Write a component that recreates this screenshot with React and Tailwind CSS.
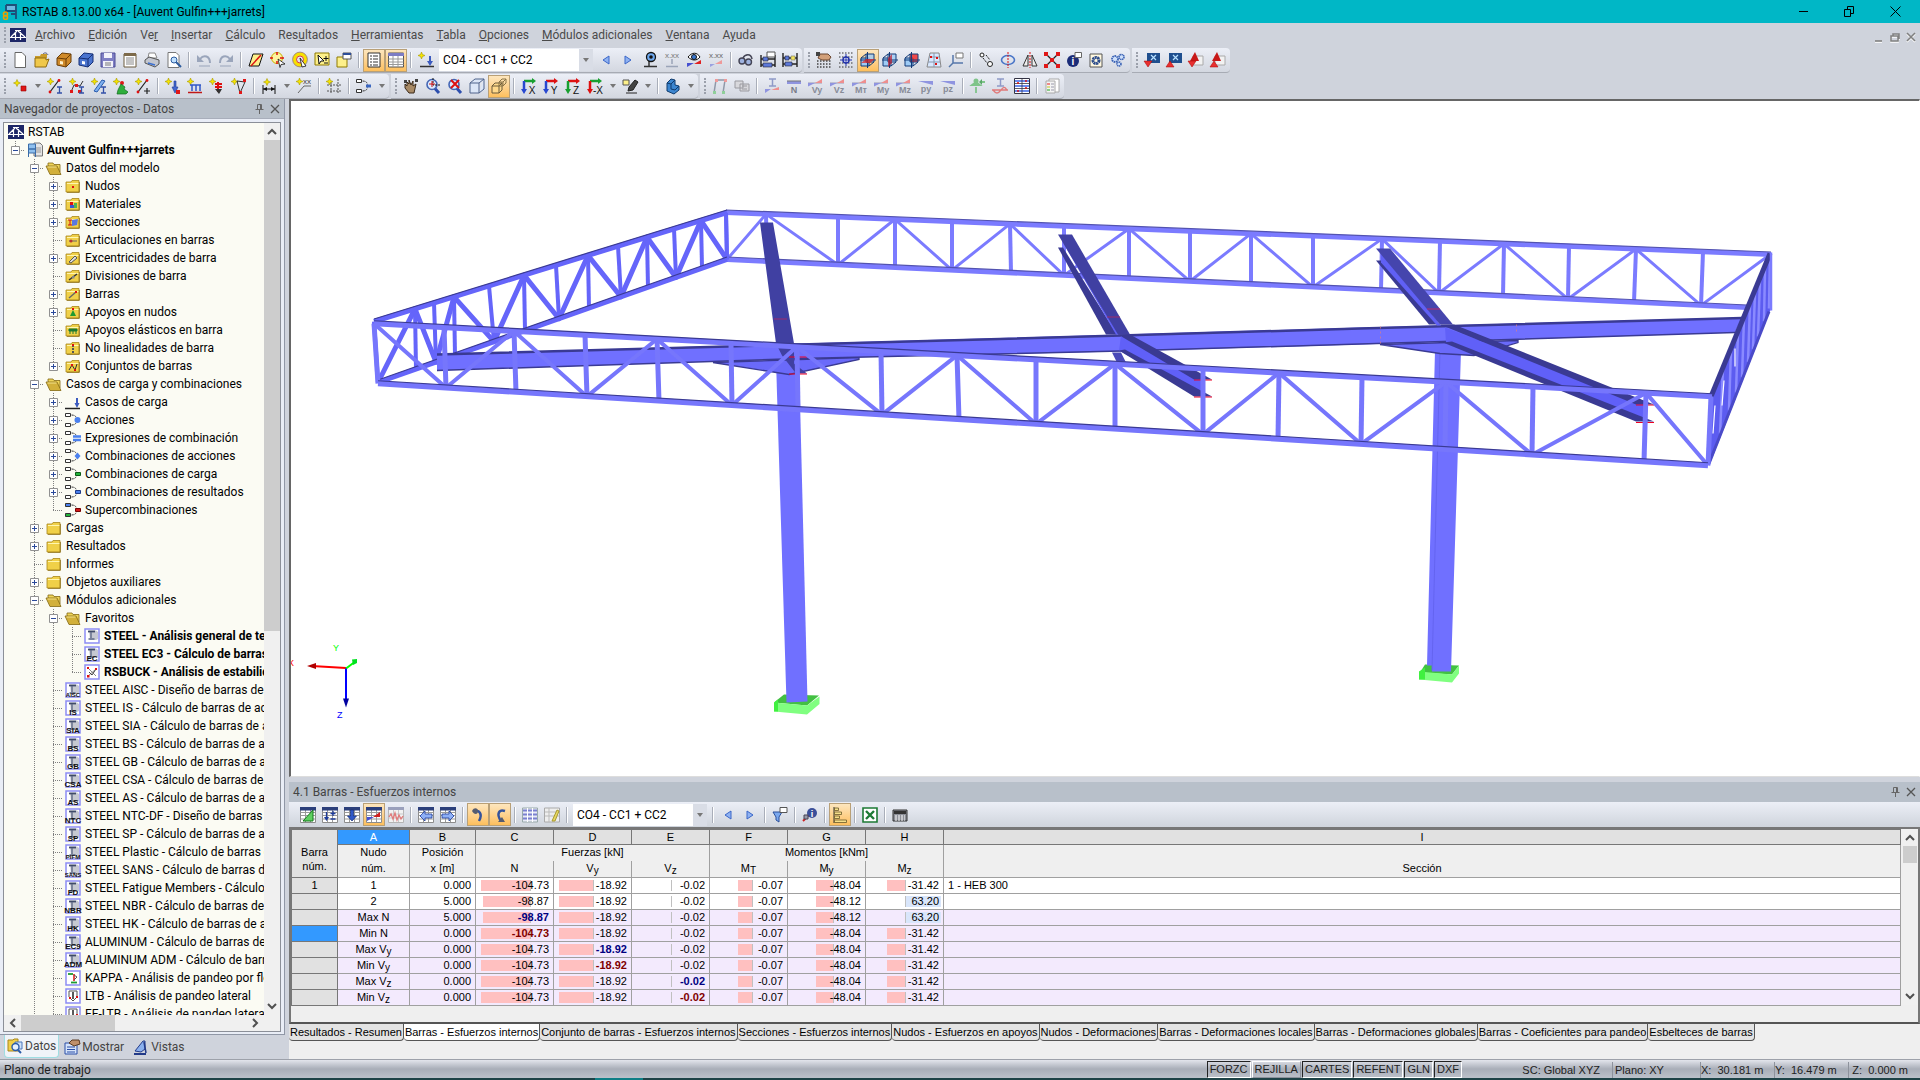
import { Fragment } from "react";

/* ---------- small icon parts ---------- */

const Spark = ({ x = 3.5, y = 3.5 }) => (
  <g transform={`translate(${x} ${y})`}>
    <path d="M0-3.5 1-1 3.5 0 1 1 0 3.5-1 1-3.5 0-1-1Z" fill="#f5e400" stroke="#a89a00" strokeWidth=".6" />
  </g>
);

const Folder = ({ children }) => (
  <>
    <path d="M1 4h5l1-1.5h7V14H1Z" fill="#f0d048" stroke="#a8861a" strokeWidth=".8" />
    <path d="M2 5.5h11.5" stroke="#fff6b0" />
    <path d="M14.4 4v10.4H2" stroke="#8a6c10" fill="none" strokeWidth=".8" />
    {children}
  </>
);

const Member = () => (
  <>
    <path d="M3 14 12 2" stroke="#222" strokeWidth="1.2" />
    <circle cx="3" cy="14" r="1.4" fill="#e01010" />
    <circle cx="12" cy="2.5" r="1.4" fill="#e01010" />
  </>
);

const Grid = ({ c = "#9a9a9a" }) => (
  <>
    <path d="M.5.5h15v15H.5Z" fill="#fff" stroke="#8c8c8c" />
    <path d="M.5 5.5h15M.5 8.5h15M.5 12h15M5.5 3v12M10.5 3v12" stroke={c} />
    <path d="M0 0h16v3.5H0Z" fill="#2b3f7c" />
  </>
);

const Cube = ({ a = "#9ecbf5", b = "#9ecbf5" }) => (
  <>
    <path d="M1 6h8v8H1Z" fill={a} stroke="#123a78" />
    <path d="M6 2h8v8H6Z" fill={b} fillOpacity=".8" stroke="#123a78" />
    <path d="M1 6 6 2M9 14l5-4M7.5 0v16M0 8h16" stroke="#123a78" />
  </>
);

const Lens = ({ children }) => (
  <>
    <path d="m9.5 10 4.5 5" stroke="#2d4fae" strokeWidth="3" />
    <circle cx="7" cy="6.5" r="5" fill="#dcecff" stroke="#4466b5" strokeWidth="1.6" />
    {children}
  </>
);

const Flow = ({ a = "#fff", b = "#fff", children }) => (
  <>
    <path d="M.5 1.5h5v3h-5Z" fill={a} stroke="#333" />
    <path d="M.5 11.5h5v3h-5Z" fill={b} stroke="#333" />
    <path d="M6.5 3c3 0 4.500 1 5 3.500M6.500 13c3 0 4.500-1 5-3.500" stroke="#333" fill="none" strokeDasharray="2 1" />
    {children}
  </>
);

const Diagram = ({ t }) => (
  <>
    <path d="M0 5h14" stroke="#9b9bb5" />
    <path d="M0 5h7L0 8.500Z" fill="#8f94e0" />
    <path d="M7 5h7V1Z" fill="#ee8f8f" />
    <text x="9" y="15" fontSize="9" fontWeight="700" textAnchor="middle" fill="#888c98">{t}</text>
  </>
);

const AxisView = ({ c, d, t }) => (
  <>
    <path d="M3 3h9" stroke={c} strokeWidth="2.500" />
    <path d="M3 3v9" stroke={d} strokeWidth="2.500" />
    <path d="m11 0 4 3-4 3Z" fill={c} />
    <path d="M0 11h6l-3 5Z" fill={d} />
    <text x="11" y="15.500" fontSize="10" textAnchor="middle" fill="#111">{t}</text>
  </>
);

const Truss = () => (
  <>
    <path d="M0 1h16v14H0Z" fill="#1d2667" />
    <path d="M0 10.500h16M1 10 7 4M8 4l7 6M5.500 5v8M10.500 5v8M5 3.500h6" stroke="#fff" fill="none" strokeWidth="1.200" />
  </>
);

const Norm = ({ t, children }) => (
  <>
    <path d="M1 1h14v14H1Z" fill="#fff" stroke="#8d8df5" strokeWidth="1.500" />
    {children || (
      <>
        <path d="M5 2.500h7l2 1.500v7l-2 1H6Z" fill="#c6c9d1" />
        <path d="M4 3.500h7" stroke="#3f4b68" strokeWidth="1.800" />
        <path d="M7 4v6M4.500 11h6" stroke="#5f6a86" strokeWidth="1.400" />
      </>
    )}
    {t && (
      <text x="8" y="14.500" fontSize={t.length > 3 ? 6 : 8} fontWeight="700" textAnchor="middle" fill="#111">{t}</text>
    )}
  </>
);

const ICONS = {
  doc: <path d="M3 .5h7l3.500 3.500v11.500H3Z" fill="#fff" stroke="#666" />,
  open: <><path d="M1 4h5l1-2h6v4H1Z" fill="#c99c2a" /><path d="M1 15V6h11v2l3-1-3 8Z" fill="#f0c84a" stroke="#8f6b10" /><path d="M9 2c2-2 4-1 5 1" stroke="#557" fill="none" /></>,
  blockO: <><path d="m1 6 5-5 9 1v8l-5 5-9-2Z" fill="#d08a2a" stroke="#6b3e08" /><path d="m1 6 9 1 5-5M10 7v8" stroke="#6b3e08" fill="none" /><path d="m4 9 3 .5v3l-3-.5Z" fill="#fff3cf" /></>,
  blockB: <><path d="m1 6 5-5 9 1v8l-5 5-9-2Z" fill="#4a74cf" stroke="#162f75" /><path d="m1 6 9 1 5-5M10 7v8" stroke="#162f75" fill="none" /><path d="m4 9 3 .5v3l-3-.5Z" fill="#fff" /></>,
  save: <><path d="M1 1h14v14H1Z" fill="#7f7fc4" stroke="#4d4d96" /><path d="M4 1h8v5H4ZM3 9h10v6H3Z" fill="#f2f2fa" /><path d="M5 11h6M5 13h6" stroke="#777" /></>,
  report: <><path d="M2 2h12v13H2Z" fill="#fff" stroke="#6b5a3c" /><path d="M2 1h12v3H2Z" fill="#7d6a4a" /><path d="M4 6h8M4 8h8M4 10h8M4 12h8" stroke="#888" /></>,
  print: <><path d="M5 1h6l2 5H4Z" fill="#fff" stroke="#888" /><path d="m1 8 4-3 10 3v4l-4 3-10-4Z" fill="#c3c6cf" stroke="#555" /><path d="m4 11 7 2" stroke="#3b6fd0" strokeWidth="1.500" /></>,
  preview: <><path d="M2 .5h8l3 3v12H2Z" fill="#fff" stroke="#777" /><circle cx="8" cy="8" r="3" fill="#bfe0ff" stroke="#2d5c9e" /><path d="m10 10 5 5" stroke="#2d5c9e" strokeWidth="2" /></>,
  undo: <><path d="M4 7c4-5 10-3 10 4" stroke="#9aa5bb" strokeWidth="2" fill="none" /><path d="M1 3v7h7Z" fill="#9aa5bb" /><path d="M3 14h11" stroke="#9aa5bb" /></>,
  redo: <><path d="M12 7C8 2 2 4 2 11" stroke="#9aa5bb" strokeWidth="2" fill="none" /><path d="M15 3v7H8Z" fill="#9aa5bb" /><path d="M2 14h11" stroke="#9aa5bb" /></>,
  selPoly: <><path d="M5 2h10l-4 12H1Z" fill="#fdf08a" stroke="#111" /><path d="M3 14 13 3" stroke="#d11" strokeWidth="1.500" /></>,
  selCirc: <><circle cx="7" cy="6" r="5.500" fill="#fdf3a0" stroke="#c8b000" /><path d="M7 0v3M7 9v3M0 6h3M10 6h4" stroke="#d11" strokeWidth="1.500" /><path d="m8 7 7 5-4 .5-1 3Z" fill="#fff" stroke="#111" strokeWidth=".8" /></>,
  selRing: <><circle cx="8" cy="7.500" r="5.500" fill="none" stroke="#f7e000" strokeWidth="3.500" /><circle cx="8" cy="7.500" r="3.500" fill="none" stroke="#d11" strokeWidth=".8" /><circle cx="8" cy="7.500" r="7.400" fill="none" stroke="#866" strokeWidth=".7" /><path d="m8 6 6 8-4 1Z" fill="#fff" stroke="#111" strokeWidth=".8" /></>,
  selBox: <><path d="M1 1h14v12H1Z" fill="#fdf08a" stroke="#8f7b00" /><path d="m4 3 6 6H7l-2 3Z" fill="#fff" stroke="#111" /><path d="M12 4v5M9.500 6.500h5M10 11h4" stroke="#111" /></>,
  selWin: <><path d="M1 5h10v10H1Z" fill="#fdf08a" stroke="#8f7b00" /><path d="M7 1h8v6H7Z" fill="#fff" stroke="#555" /><path d="M7 1h8v2H7Z" fill="#2b4d9a" /></>,
  nav: <><path d="M2 1h12v14H2Z" fill="#fff" stroke="#333" /><path d="M4 4h2M7 4h5M4 7h2M7 7h5M4 10h2M7 10h5M4 13h2M7 13h5" stroke="#333" /></>,
  tables: <><path d="M.5 1h15v14H.5Z" fill="#fff" stroke="#555" /><path d="M0 1h16v3H0Z" fill="#7d7dc4" /><path d="M.5 7h15M.5 10h15M.5 12.500h15M5 4v11M10 4v11" stroke="#999" /></>,
  loadNew: <><Spark /><path d="M2 14.500h14" stroke="#333" strokeWidth="1.500" /><path d="M11 4v5H9l3 5 3-5h-2V4Z" fill="#3c5bbf" /></>,
  left: <path d="M11 4v8L5 8Z" fill="#8fb2f2" stroke="#3a66c8" />,
  right: <path d="M5 4v8l6-4Z" fill="#8fb2f2" stroke="#3a66c8" />,
  eyeLoad: <><path d="M2 14.500h13M7 8v6" stroke="#333" strokeWidth="1.500" /><circle cx="9" cy="5" r="4.500" fill="#6ea8ee" stroke="#111" strokeWidth="1.300" /><circle cx="9" cy="5" r="1.800" fill="#111" /></>,
  xxx: <><text x="8" y="6" fontSize="8" textAnchor="middle" fill="#777">x.xx</text><path d="M2 14.500h12M8 7v5" stroke="#9aa4b8" strokeWidth="1.500" /></>,
  eyeRes: <><path d="M2 5c4-5 9-5 12 0-3 4-8 4-12 0Z" fill="#fff" stroke="#111" /><circle cx="8" cy="5" r="2.500" fill="#3b78d0" stroke="#111" /><path d="M1 11h7l-7 4Z" fill="#4650d0" /><path d="M8 12h7V8Z" fill="#e02020" /></>,
  xxxRes: <><text x="8" y="6" fontSize="8" textAnchor="middle" fill="#666">x.xx</text><path d="M2 12h5l-5 3Z" fill="#9aa0e0" /><path d="M7 12h7V8Z" fill="#ee9a9a" /></>,
  gogg: <><circle cx="4" cy="9" r="3" fill="#9fb3e0" stroke="#445" strokeWidth="1.400" /><circle cx="10.500" cy="10" r="3" fill="#9fb3e0" stroke="#445" strokeWidth="1.400" /><path d="M5 6c2-4 8-5 9 1" stroke="#445" fill="none" strokeWidth="1.500" /></>,
  abacus: <><path d="M1 3v12M15 3v12M1 7h14M1 13h14" stroke="#222" strokeWidth="1.400" /><path d="M3 5h5v4H3ZM3 11h9v4H3Z" fill="#5c78d8" stroke="#223" strokeWidth=".6" /><path d="M7 0h8v5H7Z" fill="#fff" stroke="#555" /></>,
  abacus2: <><path d="M1 1v14M15 1v14M1 6h14M1 12h14" stroke="#222" strokeWidth="1.400" /><path d="M3 4h4v4H3ZM3 10h7v4H3Z" fill="#5c78d8" stroke="#223" strokeWidth=".6" /><path d="M9 4h4v4H9Z" fill="#f3e35c" stroke="#776" strokeWidth=".6" /></>,
  handGrid: <><path d="M1 9h14M1 12h14M1 15h14" stroke="#444" strokeDasharray="1.500 1.500" strokeWidth="1.500" /><path d="M4 2h8l3 3-2 3H6L2 6Z" fill="#d2a07a" stroke="#6b4630" /><path d="M0 0h4v4H0Z" fill="#444" /></>,
  gridPt: <><path d="M1 1h14M1 5h14M1 11h14M1 15h14" stroke="#333" strokeDasharray="1.500 1.500" /><circle cx="8" cy="8" r="3" fill="#fff" stroke="#2233aa" strokeWidth="1.500" /><path d="M8 2v12M2 8h12" stroke="#2233aa" /></>,
  wp1: <><Cube /><path d="m1 11 5-4 9 0-5 4Z" fill="#e02020" fillOpacity=".7" /></>,
  wp2: <><Cube /><path d="m6 6 4-4v9l-4 4Z" fill="#c02030" fillOpacity=".7" /></>,
  wp3: <Cube b="#f02020" />,
  net: <><path d="M4 1h9l2 14H1Z" fill="#d8e8ff" stroke="#888" /><path d="M3 5h10M2 10h12M8 1v14" stroke="#8898b0" /><path d="M4 4h2v2H4ZM10 5h2v2h-2ZM9 11h2v2H9Z" fill="#d11" /></>,
  csys: <><path d="M5 3v8H15M5 11l-4 4" stroke="#5577aa" fill="none" strokeWidth="1.500" /><path d="M8 1h7v5H8Z" fill="#fff" stroke="#777" /></>,
  move: <><circle cx="4" cy="3" r="2" fill="#fff" stroke="#222" /><circle cx="12" cy="12" r="2.500" fill="#fff" stroke="#222" /><path d="m5 6 4 5M8 3l4 5" stroke="#222" strokeDasharray="2 1" /></>,
  rotate: <><ellipse cx="8" cy="8" rx="6.500" ry="4.500" fill="none" stroke="#4a76c8" strokeWidth="1.600" /><path d="M8 0v16" stroke="#d11" strokeDasharray="2 1" /></>,
  mirror: <><path d="M6 3v11H1ZM10 3v11h5Z" fill="#eee" stroke="#333" /><path d="M8 0v16" stroke="#d11" strokeDasharray="2 1" /></>,
  cross: <><path d="m2 2 12 12M14 2 2 14" stroke="#222" strokeWidth="1.300" /><path d="M0 0h4v4H0ZM12 0h4v4h-4ZM0 12h4v4H0ZM12 12h4v4h-4ZM6 6h4v4H6Z" fill="#e01818" /></>,
  info: <><circle cx="7" cy="9" r="6" fill="#1b2c78" /><text x="7" y="13" fontSize="10" fontWeight="700" textAnchor="middle" fill="#fff">i</text><path d="M9 .5h6.500v5H9Z" fill="#fff" stroke="#666" /></>,
  gearDoc: <><path d="M2 2h12v13H2Z" fill="#fff8e0" stroke="#555" /><circle cx="8" cy="8.500" r="3" fill="none" stroke="#2a4a8a" strokeWidth="3" strokeDasharray="2 .5" /></>,
  gears: <><circle cx="5" cy="7" r="3" fill="#cfe0fa" stroke="#3a62b5" strokeWidth="1.800" strokeDasharray="1.600 .6" /><circle cx="11.500" cy="5" r="2.500" fill="#cfe0fa" stroke="#3a62b5" strokeWidth="1.600" strokeDasharray="1.400 .5" /><circle cx="9" cy="12" r="2" fill="#cfe0fa" stroke="#3a62b5" strokeWidth="1.600" strokeDasharray="1.200 .5" /></>,
  dlA: <><path d="M3 1h13v10H3Z" fill="#1f4f8f" /><path d="m7 3 5 5M12 3 7 8" stroke="#b8e0ff" strokeWidth="1.200" /><path d="M0 9h8l-4 6Z" fill="#e83030" stroke="#a00" strokeWidth=".5" /></>,
  ulA: <><path d="M3 1h13v10H3Z" fill="#1f4f8f" /><path d="m7 3 5 5M12 3 7 8" stroke="#b8e0ff" strokeWidth="1.200" /><path d="M0 15h8L4 9Z" fill="#e83030" stroke="#a00" strokeWidth=".5" /></>,
  dlB: <><path d="M5 4h10v9H5Z" fill="#f2f2f2" stroke="#aaa" /><path d="M7 0 2 9h9Z" fill="#c81818" /><path d="M0 9h8l-4 6Z" fill="#e83030" stroke="#a00" strokeWidth=".5" /></>,
  ulB: <><path d="M5 4h10v9H5Z" fill="#f2f2f2" stroke="#aaa" /><path d="M7 0 2 9h9Z" fill="#c81818" /><path d="M0 15h8L4 9Z" fill="#e83030" stroke="#a00" strokeWidth=".5" /></>,

  node: <><Spark x={5} y={5} /><path d="M9 8h5v5H9Z" fill="#e01818" stroke="#900" strokeWidth=".6" /></>,
  member: <><Member /><Spark /><path d="M10 9h5M12.500 9v6M10 15h5" stroke="#3350a8" strokeWidth="1.300" /></>,
  memberSet: <><path d="M2 14 5 7l6 1 3-5" stroke="#333" fill="none" /><path d="M1 12h3v3H1ZM6 6h3v3H6ZM9 12h3v3H9Z" fill="#e01818" /><Spark /><path d="M10 9h5M12.500 9v6M10 15h5" stroke="#3350a8" strokeWidth="1.300" /></>,
  section: <><path d="m3 13 8-11 3 1-8 11Z" fill="#7fb0f0" stroke="#2a5cae" /><Spark /><path d="M10 9h5M12.500 9v6M10 15h5" stroke="#3350a8" strokeWidth="1.300" /></>,
  support: <><Spark /><circle cx="9" cy="5" r="2" fill="#e01818" /><path d="m8 6 4 3-1 2 4 3-2 2H4l1-4Z" fill="#2fae3c" stroke="#136a1c" strokeWidth=".7" /></>,
  hinge: <><Member /><Spark /><path d="M12 10v6M9 13h6" stroke="#222" strokeWidth="1.200" /></>,
  nodeLoad: <><Spark /><path d="M9 3v6H7l3 6 3-6h-2V3Z" fill="#4468d0" stroke="#1b3a90" strokeWidth=".6" /><path d="M11 12h4v4h-4Z" fill="#e01818" /></>,
  lineLoad: <><Spark /><path d="M3 7h11M5 7v6M9 7v6M13 7v6" stroke="#3058c8" strokeWidth="1.500" /><path d="M1 14.500h14" stroke="#c01818" strokeWidth="1.500" /></>,
  redLoad: <><Spark /><path d="M9 4v10M6 6h7M6 9h7" stroke="#d11" strokeWidth="2" /><path d="M6 11h7l-3 5Z" fill="#333" /></>,
  impose: <><Spark /><path d="m6 3 8 1-5 11Z" fill="none" stroke="#333" /><path d="M12 1h3v3h-3ZM8 13h3v3H8Z" fill="#e01818" /></>,
  dim: <><path d="M2 7v9M14 7v9M2 11h12" stroke="#111" /><path d="m2 11 4-2v4ZM14 11l-4-2v4Z" fill="#111" /><Spark x={6} y={4} /></>,
  dimX: <><text x="11" y="6" fontSize="8" textAnchor="middle" fill="#444">xx</text><path d="M2 15 8 8h7" stroke="#666" fill="none" /><Spark /></>,
  guide: <><path d="M5 4v12M12 1v15M1 7h15M1 13h15" stroke="#555" strokeDasharray="2 1" /><Spark /></>,
  flow: <Flow><path d="M10 8h5" stroke="#3a66c0" strokeWidth="3" /></Flow>,
  hand: <><path d="M1 2h3v3H1ZM12 1h3v3h-3Z" fill="#444" /><path d="m2 6 2 2V4l2 2V2l2 5 2-4v5l3-2-2 9H6L2 10Z" fill="#a88a66" stroke="#3a2a1a" /></>,
  zoomWin: <Lens><path d="M8 0v7h7" stroke="#111" fill="none" strokeDasharray="2 1" /><path d="M7 3v6M4 6h6" stroke="#c11" /></Lens>,
  zoomX: <Lens><path d="m4 2 8 8M12 2 4 10" stroke="#d11" strokeWidth="2" /></Lens>,
  cube: <path d="M1 5h9v10H1ZM1 5l5-4h9l-5 4M15 1v10l-5 4" fill="#dbe6f7" stroke="#51658c" />,
  cubeAct: <><path d="M1 8h7v7H1ZM1 8l3-3h7v7l-3 3M8 8l3-3" fill="#ffd98c" stroke="#6b5a3a" /><path d="M8 4h4v4H8ZM8 4l3-3h4v4l-3 3M12 4l3-3" fill="none" stroke="#8a7446" /></>,
  vx: <AxisView c="#18a030" d="#2848d0" t="X" />,
  vy: <AxisView c="#d11" d="#2848d0" t="Y" />,
  vz: <AxisView c="#d11" d="#18a030" t="Z" />,
  vmx: <AxisView c="#18a030" d="#d11" t="-X" />,
  light: <><path d="M1 2h6v5H1Z" fill="#fdf08a" stroke="#555" /><path d="m7 9 6-7 3 2-5 8-5 1ZM4 15h11" fill="#444" stroke="#222" /></>,
  solid: <><path d="m2 5 4-4 4 1v5l4 1v4l-5 4-7-3Z" fill="#3c86d0" stroke="#0f3a6c" /><path d="m2 5 4 1 4-4M6 6v5l4 1 4-4" stroke="#0f3a6c" fill="none" /></>,
  frame: <><path d="M2 15 4 2h9l-2 13" fill="none" stroke="#8f98a8" strokeWidth="1.500" /><path d="M3 1h3v3H3ZM12 1h3v3h-3Z" fill="#ef9a9a" /><path d="M1 13h3v3H1ZM10 13h3v3h-3Z" fill="#8fcf9a" /></>,
  film: <><path d="M1 3h8v7H1ZM6 6h9v7H6Z" fill="#d8d8dc" stroke="#9a9aa0" /><path d="M8 8h5M8 11h5" stroke="#9a9aa0" /></>,
  iSec: <><path d="M5 1h7M8.500 1v7M5 8h7" stroke="#8f9ac8" strokeWidth="1.500" /><path d="M1 11h6l-6 4Z" fill="#8f94e0" /><path d="M7 12h8V9Z" fill="#ee8f8f" /></>,
  dN: <><path d="M1 3h14v3H1Z" fill="#8f94e0" /><path d="M1 3h14" stroke="#777" /><text x="8" y="15" fontSize="9" fontWeight="700" textAnchor="middle" fill="#777b88">N</text></>,
  dVy: <Diagram t="Vy" />, dVz: <Diagram t="Vz" />, dMt: <Diagram t="Mт" />, dMy: <Diagram t="My" />, dMz: <Diagram t="Mz" />,
  dpy: <><path d="M0 3h15v4Z" fill="#8f94e0" /><text x="8" y="14" fontSize="9" fontWeight="700" textAnchor="middle" fill="#888c98">py</text></>,
  dpz: <><path d="M0 3h15v4Z" fill="#8f94e0" /><text x="8" y="14" fontSize="9" fontWeight="700" textAnchor="middle" fill="#888c98">pz</text></>,
  react: <><circle cx="6" cy="3" r="2.500" fill="#7fc48a" /><path d="m2 7 4-3 4 3ZM10 4h5M6 9v6" stroke="#7fc48a" fill="#7fc48a" strokeWidth="1.800" /><path d="m12 1-3 3 3 3Z" fill="#5aa868" /></>,
  iWave: <><path d="M5 1h7M8.500 1v7M5 8h7" stroke="#8f9ac8" strokeWidth="1.500" /><path d="M0 12h16M1 12c3 4 5 4 8 0s4-3 6 0" stroke="#e07a7a" fill="none" strokeWidth="1.300" /></>,
  winGrid: <><path d="M.5.500h15v15H.5Z" fill="#fff" stroke="#334" /><path d="M1 3h14M1 8h14M1 13h14" stroke="#3b67e8" strokeWidth="1.500" /><path d="M8 0v16M0 5.500h16M0 10.500h16" stroke="#334" strokeWidth=".8" /><path d="M3 5h2M11 10h2M11 3h2M3 13h2" stroke="#d11" strokeWidth="1.500" /></>,
  legend: <><path d="M5 1h10v13H5Z" fill="#fff" stroke="#aaa" /><path d="M2 3h9v12H2Z" fill="#f4f4f4" stroke="#aaa" /><path d="M3 5h3v2H3Z" fill="#e88" /><path d="M3 8h3v2H3Z" fill="#dd8" /><path d="M3 11h3v2H3Z" fill="#8c8" /><path d="M7 6h3M7 9h3M7 12h3" stroke="#99a" /></>,

  tEdit: <><Grid /><path d="M13 3v11H3Z" fill="#5fd060" stroke="#157a1c" /></>,
  tRow: <><Grid /><path d="M4.500 5v6M11 4v5M8.500 6.500h5M8.500 12h5" stroke="#1c3a9a" strokeWidth="1.300" /><path d="M2 10h5l-2.500 4Z" fill="#1c3a9a" /></>,
  tDown: <><Grid /><path d="M6.500 3h3v6h3l-4.500 5-4.500-5h3Z" fill="#2f58c8" stroke="#122c78" strokeWidth=".7" /></>,
  tRes: <><Grid /><path d="M1 10h7l-7 4Z" fill="#4650d0" /><path d="M7 10 14 5v5Z" fill="#d02020" /></>,
  tPulse: <><path d="M.5.500h15v15H.5Z" fill="#f2f2f2" stroke="#b5b5b5" /><path d="M.5 7h15M.5 11h15M5.500 3v12M10.500 3v12" stroke="#c8c8c8" /><path d="M0 0h16v3H0Z" fill="#9aa0bc" /><path d="M1 10l2-3 2 5 2-6 2 7 2-5 2 4 2-3" stroke="#e07a7a" fill="none" strokeWidth="1.300" /></>,
  tL: <><Grid /><path d="m2 9 5-5v3h7v4H7v3Z" fill="#8fb0f5" stroke="#1c3a9a" strokeWidth=".8" /></>,
  tR: <><Grid /><path d="m14 9-5-5v3H2v4h7v3Z" fill="#8fb0f5" stroke="#1c3a9a" strokeWidth=".8" /></>,
  hook1: <><path d="M4 5c5-3 9 2 5 9" stroke="#35539c" strokeWidth="2.500" fill="none" /><path d="M2 4c2-4 6-3 6 0 0 4-4 4-6 0Z" fill="#555c70" /></>,
  hook2: <><path d="M13 4C7 2 4 7 9 14" stroke="#35539c" strokeWidth="2.500" fill="none" /><path d="m6 15 7 0-3-5Z" fill="#555c70" /></>,
  tCols: <><path d="M.5 1h15v14H.5Z" fill="#e8eaf6" stroke="#9aa" /><path d="M1 3.500h14M1 7.500h14M1 11.500h14" stroke="#7a80d0" strokeWidth="2" /><path d="M5.500 1v14M10.500 1v14" stroke="#fff" /></>,
  tPen: <><path d="M.5 1h15v14H.5Z" fill="#eee" stroke="#aaa" /><path d="M1 5h14M1 9h14M5 1v14" stroke="#bbb" /><path d="m8 14 5-11 2 1-4 10Z" fill="#e8d860" stroke="#a89a30" /></>,
  filter: <><path d="M1 5h9l-3 5v5l-3-2v-3Z" fill="#7aa8ee" stroke="#2a4f9a" /><path d="M8 .5h7v5H8Z" fill="#fff" stroke="#555" /></>,
  infoT: <><path d="m1 14 6-6" stroke="#c22" strokeWidth="2" /><circle cx="10" cy="6" r="5" fill="#3b4f9a" /><text x="10" y="9.500" fontSize="9" fontWeight="700" textAnchor="middle" fill="#fff">i</text><path d="M2 8h4v4H2Z" fill="#99a" stroke="#445" /></>,
  bars: <><path d="M2 0v16" stroke="#333" /><path d="M2.500 1h4v2.500h-4ZM2.500 5h7v2.500h-7ZM2.500 9h5v2.500h-5ZM2.500 13h12v2.500h-12Z" fill="#f7e08a" stroke="#6b5a2a" strokeWidth=".8" /></>,
  excel: <><path d="M1 1h14v14H1Z" fill="#fff" stroke="#1d7a35" strokeWidth="1.600" /><path d="m4 4 8 8M12 4l-8 8" stroke="#1d7a35" strokeWidth="2.400" /></>,
  calc: <><path d="M1 3h14v11H1Z" fill="#8c8f98" stroke="#333" /><path d="M2 4h12v3H2Z" fill="#333" /><path d="M3 9h10M3 11h10M3 13h10" stroke="#fff" strokeDasharray="2 1" /></>,

  truss: <Truss />,
  model: <><path d="M7 1h6l2.500 2.500V14H7Z" fill="#e4e4e4" stroke="#777" /><path d="M9 6h5M9 8h5M9 10h5" stroke="#999" /><path d="M1.500 2h7v5h-7ZM1.500 7h7v4h-7M1.500 15V5M8.500 15V6" fill="#8fc0ee" stroke="#3a6ca8" /></>,
  fOpen: <><path d="M2 5V3h5l1 1.500h6V12H4Z" fill="#efd55a" stroke="#846812" strokeWidth=".8" /><path d="M0 6h11l4 8.500H4Z" fill="#d2b03a" stroke="#846812" strokeWidth=".8" /><path d="M1.500 7h9" stroke="#f5e48c" /></>,
  f: <Folder />,
  fNode: <Folder><path d="M7 8h2v2H7Z" fill="#d11" /></Folder>,
  fMat: <Folder><path d="M5 6h3v3H5Z" fill="#d11" /><path d="M5 9h4v3H5Z" fill="#3a58d0" /><path d="M9 7h3v5H9Z" fill="#4fb84f" /></Folder>,
  fSec: <Folder><path d="m7 6 6-1-1 6-5 1Z" fill="#5a78e0" /><path d="M3 6h4M5 6v5M3 11h4" stroke="#c11" /></Folder>,
  fArt: <Folder><path d="M4 9h8" stroke="#666" /><circle cx="6" cy="9" r="1.500" fill="#b33" /></Folder>,
  fExc: <Folder><path d="m4 12 6-6 2 2-6 5Z" fill="#ddd" stroke="#555" /></Folder>,
  fDiv: <Folder><path d="m4 12 8-6" stroke="#333" strokeWidth="1.500" /><path d="M7 8h2.500v2.500H7Z" fill="#888" /></Folder>,
  fBar: <Folder><path d="m4 12 7-6" stroke="#666" strokeWidth="1.500" /><path d="M10 5h2v2h-2Z" fill="#d11" /></Folder>,
  fSup: <Folder><path d="m8 6 3 6H5Z" fill="#1f9a32" /><path d="M7 4h2v2H7Z" fill="#d11" /></Folder>,
  fEla: <Folder><path d="M4 7h8v2H4ZM5 9v3M8 9v3M11 9v3" fill="#1f7a32" stroke="#1f7a32" /></Folder>,
  fNl: <Folder><path d="M8 5v8" stroke="#555" strokeWidth="2" strokeDasharray="2 1" /><path d="M7 4h2v2H7Z" fill="#d11" /></Folder>,
  fSet: <Folder><path d="m4 12 3-5 3 5 2-6" fill="none" stroke="#333" /><path d="M6 6h2v2H6ZM9 11h2v2H9Z" fill="#d11" /></Folder>,
  load: <><path d="M0 14.500h15" stroke="#222" strokeWidth="1.500" /><path d="M11 4v5H9.500l2.500 5 2.500-5H13V4Z" fill="#3c5bbf" /></>,
  acc: <Flow><circle cx="12.500" cy="8" r="3" fill="#4a80ee" /></Flow>,
  expr: <Flow><path d="M8 6.500h8M8 10h8" stroke="#4a80ee" strokeWidth="2.400" /></Flow>,
  cAcc: <Flow><path d="m12.500 4.500 3 3.500-3 3.500-3-3.500Z" fill="#4a80ee" /></Flow>,
  cCarga: <Flow><path d="M10.500 6.500h5v3h-5Z" fill="#22b43a" stroke="#0b5a16" /></Flow>,
  cRes: <Flow><path d="M10.500 6.500h5v3h-5Z" fill="#4a80ee" stroke="#1c3a8a" /></Flow>,
  cSup: <Flow a="#4a80ee" b="#22b43a"><path d="M10.500 6.500h5v3h-5Z" fill="#d01818" stroke="#700" /></Flow>,
  steel: <Norm />,
  buck: <Norm><path d="M4 4 12 12M4 12l8-7" stroke="#888" /><path d="m5 8 3 3 4-6" fill="none" stroke="#444" /><path d="M3 11h2.500v2.500H3ZM3 3h2v2H3ZM11 4h2v2h-2Z" fill="#d11" /></Norm>,
  kappa: <Norm><path d="M3 4h5" stroke="#1f9a32" strokeWidth="1.800" /><path d="M9 4v7" stroke="#d11" strokeWidth="1.500" /><path d="m9 5 3 2-3 3" fill="none" stroke="#555" /><path d="M6 12.500h6" stroke="#1f9a32" strokeWidth="1.800" /></Norm>,
  ltb: <Norm><path d="M4 3v6l4 4 4-4V3Z" fill="none" stroke="#555" /><path d="M8 4v7" stroke="#222" strokeWidth="1.500" /><path d="M4 9h2v2H4ZM11 8h2v2h-2Z" fill="#d11" /></Norm>,

  tabDatos: <><path d="M1 2h5l1-1h4v12H1Z" fill="#f0d048" stroke="#a8861a" /><path d="M8 4h7v7H8Z" fill="#cfe2fa" stroke="#4a76b8" /><circle cx="8.500" cy="9" r="3.500" fill="#e6f1ff" stroke="#2a5ca8" strokeWidth="1.400" /><path d="m11 12 3 3" stroke="#2a5ca8" strokeWidth="2" /></>,
  tabMostrar: <><path d="M1 4h12v11H1Z" fill="#d6e4fa" stroke="#2a4fa8" /><path d="M3 8h8M3 10.500h8M3 13h8" stroke="#2a4fa8" /><path d="m5 4 3-3 7 0 1 4-6 2Z" fill="#c0906a" stroke="#5a3a22" /></>,
  tabVistas: <><path d="M1 15h12" stroke="#223a88" strokeWidth="2" /><path d="m2 12 8-10 2 0v8l-4 3Z" fill="#8ab0ee" stroke="#223a88" /><path d="m11 3 2 11" stroke="#223a88" strokeWidth="1.500" /></>,
};

["AISC", "IS", "SIA", "BS", "GB", "CSA", "AS", "NTC", "SP", "PIFM", "SANS", "FD", "NBR", "HK", "EC9", "ADM", "EC"].forEach((t) => {
  ICONS["n" + t] = <Norm t={t} />;
});

const Icon = ({ name, className = "size-4" }) => (
  <svg viewBox="0 0 16 16" aria-hidden="true" className={className + " shrink-0 overflow-visible font-['Liberation_Sans',sans-serif]"}>
    {ICONS[name]}
  </svg>
);

/* ---------- toolbars: "|" separator, "v" drop-down arrow, "!" pressed, "combo" load case box ---------- */

const ROW1 = [
  "doc open blockO blockB save report print preview | undo redo | selPoly selCirc selRing selBox selWin | nav! tables! | loadNew combo left right eyeLoad xxx eyeRes xxxRes | gogg abacus abacus2",
  "handGrid gridPt wp1! wp2 wp3 net csys | move rotate mirror cross info gearDoc gears",
  "dlA ulA dlB ulB",
];

const ROW2 = [
  "node v member memberSet section support hinge | nodeLoad lineLoad redLoad impose | dim v dimX | guide | flow v",
  "hand zoomWin zoomX cube cubeAct! | vx vy vz vmx v light v | solid v",
  "frame film | iSec dN dVy dVz dMt dMy dMz dpy dpz | react iWave winGrid | legend",
];

const TABLE_BAR =
  "tEdit tRow tDown tRes! tPulse | tL tR | hook1! hook2! | tCols tPen | combo | left right | filter | infoT | bars! | excel | calc";

const Combo = ({ id, width }) => (
  <div className={"mx-0.5 flex h-[22px] items-stretch bg-white " + width}>
    <label htmlFor={id} className="sr-only">Caso de carga</label>
    <select id={id} className="min-w-0 flex-1 appearance-none bg-white pl-1 text-xs text-black outline-none">
      <option>CO4 - CC1 + CC2</option>
    </select>
    <span className="flex w-3.5 items-center justify-center bg-[#d9dde6]">
      <svg viewBox="0 0 6 4" className="w-1.5"><path d="M0 0h6L3 4Z" fill="#777" /></svg>
    </span>
  </div>
);

function Items({ spec, comboId, comboWidth }) {
  return spec.split(" ").map((it, i) => {
    if (it === "|") return <span key={i} className="mx-[3px] h-4 w-0.5 shrink-0 border-l border-[#a9aeb9] bg-white" />;
    if (it === "v")
      return (
        <button key={i} aria-label="Más" className="flex h-6 w-[13px] items-center justify-center">
          <svg viewBox="0 0 6 4" className="w-1.5"><path d="M0 0h6L3 4Z" fill="#777" /></svg>
        </button>
      );
    if (it === "combo") return <Combo key={i} id={comboId} width={comboWidth} />;
    const on = it.endsWith("!");
    const name = on ? it.slice(0, -1) : it;
    return (
      <button
        key={i}
        aria-label={name}
        className={
          "flex h-[23px] w-[22px] shrink-0 items-center justify-center border " +
          (on ? "border-[#b9a077] bg-linear-to-b from-[#fde6bd] to-[#fdbf5c]" : "border-transparent")
        }
      >
        <Icon name={name} />
      </button>
    );
  });
}

const Toolbar = ({ spec }) => (
  <div className="flex h-[25px] items-center rounded-r-sm border-b border-[#a7abb4] bg-linear-to-b from-[#eceff7] to-[#d3d7e0] pr-px">
    <span className="mr-[3px] ml-1 h-4 w-0.5 border-l-2 border-dotted border-[#9ba0ab]" />
    <Items spec={spec} comboId="lc-main" comboWidth="w-[154px]" />
  </div>
);

/* ---------- navigator tree: depth, icon, label, state ("+", "-", "") ---------- */

const TREE = [
  [0, "truss", "RSTAB", ""],
  [1, "model", "Auvent Gulfin+++jarrets", "-", true],
  [2, "fOpen", "Datos del modelo", "-"],
  [3, "fNode", "Nudos", "+"],
  [3, "fMat", "Materiales", "+"],
  [3, "fSec", "Secciones", "+"],
  [3, "fArt", "Articulaciones en barras", ""],
  [3, "fExc", "Excentricidades de barra", "+"],
  [3, "fDiv", "Divisiones de barra", ""],
  [3, "fBar", "Barras", "+"],
  [3, "fSup", "Apoyos en nudos", "+"],
  [3, "fEla", "Apoyos elásticos en barra", ""],
  [3, "fNl", "No linealidades de barra", ""],
  [3, "fSet", "Conjuntos de barras", "+"],
  [2, "fOpen", "Casos de carga y combinaciones", "-"],
  [3, "load", "Casos de carga", "+"],
  [3, "acc", "Acciones", "+"],
  [3, "expr", "Expresiones de combinación", "+"],
  [3, "cAcc", "Combinaciones de acciones", "+"],
  [3, "cCarga", "Combinaciones de carga", "+"],
  [3, "cRes", "Combinaciones de resultados", "+"],
  [3, "cSup", "Supercombinaciones", ""],
  [2, "f", "Cargas", "+"],
  [2, "f", "Resultados", "+"],
  [2, "f", "Informes", ""],
  [2, "f", "Objetos auxiliares", "+"],
  [2, "fOpen", "Módulos adicionales", "-"],
  [3, "fOpen", "Favoritos", "-"],
  [4, "steel", "STEEL - Análisis general de tensiones", "", true],
  [4, "nEC", "STEEL EC3 - Cálculo de barras de acero", "", true],
  [4, "buck", "RSBUCK - Análisis de estabilidad", "", true],
  [3, "nAISC", "STEEL AISC - Diseño de barras de acero", ""],
  [3, "nIS", "STEEL IS - Cálculo de barras de acero", ""],
  [3, "nSIA", "STEEL SIA - Cálculo de barras de acero", ""],
  [3, "nBS", "STEEL BS - Cálculo de barras de acero", ""],
  [3, "nGB", "STEEL GB - Cálculo de barras de acero", ""],
  [3, "nCSA", "STEEL CSA - Cálculo de barras de acero", ""],
  [3, "nAS", "STEEL AS - Cálculo de barras de acero", ""],
  [3, "nNTC", "STEEL NTC-DF - Diseño de barras de acero", ""],
  [3, "nSP", "STEEL SP - Cálculo de barras de acero", ""],
  [3, "nPIFM", "STEEL Plastic - Cálculo de barras de acero", ""],
  [3, "nSANS", "STEEL SANS - Cálculo de barras de acero", ""],
  [3, "nFD", "STEEL Fatigue Members - Cálculo a fatiga", ""],
  [3, "nNBR", "STEEL NBR - Cálculo de barras de acero", ""],
  [3, "nHK", "STEEL HK - Cálculo de barras de acero", ""],
  [3, "nEC9", "ALUMINUM - Cálculo de barras de aluminio", ""],
  [3, "nADM", "ALUMINUM ADM - Cálculo de barras de aluminio", ""],
  [3, "kappa", "KAPPA - Análisis de pandeo por flexión", ""],
  [3, "ltb", "LTB - Análisis de pandeo lateral", ""],
  [3, "ltb", "FE-LTB - Análisis de pandeo lateral", ""],
];

// does the branch at depth d go on below row i? (the list is cut off at the bottom)
function goesOn(i, d) {
  for (let j = i + 1; j < TREE.length; j++) {
    if (TREE[j][0] === d) return true;
    if (TREE[j][0] < d) return false;
  }
  return d === 2 || d === 3;
}

function Guide({ i, d }) {
  const [depth, , , state] = TREE[i];
  const own = d === depth;
  const more = goesOn(i, d);
  return (
    <svg viewBox="0 0 19 18" className="h-[18px] w-[19px] shrink-0" aria-hidden="true">
      <g stroke="#808080" strokeDasharray="1 1">
        {(own || more) && <path d={"M9.5 0V" + (more ? 18 : 9)} />}
        {own && <path d="M9 9.500H20" />}
      </g>
      {own && state && (
        <>
          <path d="M5.500 5.500h8v8h-8Z" fill="#fff" stroke="#919191" />
          <path d={state === "+" ? "M7 9.500h5M9.500 7v5" : "M7 9.500h5"} stroke="#2b4a9a" />
        </>
      )}
    </svg>
  );
}

const Tree = () => (
  <ul className="min-h-0 min-w-0 flex-1 overflow-hidden bg-[#fbfbf3] pl-0.5 text-xs whitespace-nowrap text-black">
    {TREE.map(([depth, icon, label, , bold], i) => (
      <li key={i} className="flex h-[18px] items-center">
        {Array.from({ length: depth }, (_, k) => (
          <Guide key={k} i={i} d={k + 1} />
        ))}
        <span className="w-[22px] shrink-0 pl-0.5"><Icon name={icon} /></span>
        <span className={bold ? "font-bold" : ""}>{label}</span>
      </li>
    ))}
  </ul>
);

const Chevron = ({ d }) => (
  <svg viewBox="0 0 10 10" className="size-2.5" fill="none" stroke="#505050" strokeWidth="2"><path d={d} /></svg>
);
const UP = "M1 7 5 3l4 4";
const DOWN = "M1 3l4 4 4-4";
const LEFT = "M7 1 3 5l4 4";
const RIGHT = "M3 1l4 4-4 4";

const PanelButtons = () => (
  <div className="flex items-center gap-1.5 pr-1">
    <button aria-label="Fijar">
      <svg viewBox="0 0 10 12" className="h-3 w-2.5" fill="none" stroke="#666"><path d="M3.500 1.500h4v5h-4ZM6.500 2v4M1.500 6.500h8M5.500 7v4" /></svg>
    </button>
    <button aria-label="Cerrar">
      <svg viewBox="0 0 10 10" className="size-2.5" stroke="#555" strokeWidth="1.300"><path d="m1 1 8 8M9 1 1 9" /></svg>
    </button>
  </div>
);

function Navigator() {
  return (
    <aside className="flex w-[285px] shrink-0 flex-col">
      <div className="flex min-h-0 flex-1 flex-col border-r border-b border-[#9097a6] bg-[#e9edf6]">
        <div className="flex h-5 shrink-0 items-center justify-between border-b border-[#a8aebb] bg-[#b8c0ca] pl-1 text-xs text-[#444]">
          <h2>Navegador de proyectos - Datos</h2>
          <PanelButtons />
        </div>
        <div className="mx-[3px] mt-[3px] mb-0.5 flex min-h-0 flex-1 flex-col border border-[#8b8f98]">
          <div className="flex min-h-0 flex-1">
            <Tree />
            <div className="flex w-4 flex-col items-center justify-between bg-[#f0f0f0]">
              <span className="flex h-[17px] shrink-0 items-center"><Chevron d={UP} /></span>
              <span className="h-[55%] w-full bg-[#cdcdcd]" />
              <span className="flex flex-1 items-end pb-1"><Chevron d={DOWN} /></span>
            </div>
          </div>
          <div className="flex h-4 shrink-0 items-center bg-[#f0f0f0] pr-4">
            <span className="flex w-[17px] justify-center"><Chevron d={LEFT} /></span>
            <span className="h-full w-[94px] bg-[#cdcdcd]" />
            <span className="flex flex-1 justify-end pr-1"><Chevron d={RIGHT} /></span>
          </div>
        </div>
      </div>
      <nav className="flex h-6 shrink-0 items-start gap-px pl-1 text-xs text-[#444]">
        <button className="flex h-[23px] items-center gap-0.5 rounded-b-sm border border-t-0 border-[#9fdde2] bg-[#f0f3f8] px-0.5"><Icon name="tabDatos" />Datos</button>
        <button className="flex h-[23px] items-center gap-0.5 px-1"><Icon name="tabMostrar" />Mostrar</button>
        <button className="flex h-[23px] items-center gap-0.5 px-1"><Icon name="tabVistas" />Vistas</button>
      </nav>
    </aside>
  );
}

/* ---------- 3D model ---------- */

// nodes of the lattice frames: x on the top chord, x on the bottom chord
const FRONT = [
  [374, 378], [444, 446], [514, 516], [585, 587], [657, 659], [731, 732], [797, 798], [881, 882], [957, 959], [1036, 1036],
  [1115, 1115], [1203, 1203], [1279, 1278], [1362, 1361], [1446, 1445], [1533, 1532], [1646, 1644], [1711, 1708],
];
const BACK = [
  [726, 727], [766, 767], [838, 838], [895, 895], [952, 952], [1010, 1011], [1064, 1064], [1129, 1129], [1190, 1190],
  [1251, 1251], [1313, 1313], [1382, 1381], [1440, 1439], [1504, 1503], [1569, 1568], [1636, 1634], [1703, 1701], [1770, 1769],
];
const SIDE = [
  [374, 378], [415, 416], [434, 436], [454, 455], [489, 494], [524, 525], [556, 559], [588, 589], [618, 621],
  [647, 648], [674, 676], [701, 702], [726, 727],
];
const RIGHT_SIDE = [
  [1770, 1769], [1765, 1764], [1760, 1758], [1755, 1753], [1750, 1748], [1744, 1742], [1738, 1736], [1731, 1729], [1723, 1720], [1711, 1708],
];

function Lattice({ nodes, top, bottom, chord, bar, diag, color, dark, flip }) {
  const at = ([x1, y1, x2, y2], x) => y1 + ((y2 - y1) * (x - x1)) / (x2 - x1);
  const pts = nodes.map(([t, b], i) => ((i % 2 === 0) !== !!flip ? [t, at(top, t)] : [b, at(bottom, b)]));
  const line = ([x1, y1, x2, y2], dy, c, w) => <path d={`M${x1} ${y1 + dy}L${x2} ${y2 + dy}`} stroke={c} strokeWidth={w} />;
  return (
    <g fill="none" strokeLinejoin="round">
      <path d={"M" + pts.map((p) => p.join(" ")).join("L")} stroke={color} strokeWidth={diag} />
      {nodes.map(([t, b]) => (
        <path key={t} d={`M${t} ${at(top, t)}L${b} ${at(bottom, b)}`} stroke={color} strokeWidth={bar} />
      ))}
      {line(top, 0, color, chord)}
      {line(bottom, 0, color, chord)}
      {line(top, -chord / 2, dark, 1.2)}
      {line(bottom, -chord / 2, dark, 1.2)}
    </g>
  );
}

const DARK = "#3a3a93";
const FACE = "#7070ff";

function Model() {
  return (
    <svg viewBox="291 101 1628 674" className="size-full" role="img" aria-label="Modelo 3D">
      <Lattice nodes={BACK} top={[726, 212, 1771, 254]} bottom={[727, 259, 1747, 307]} chord={5} bar={4} diag={3} color="#7b7bff" dark="#5252b0" flip />
      <Lattice nodes={SIDE} top={[374, 321, 727, 212]} bottom={[378, 382, 727, 259]} chord={5} bar={4} diag={5} color="#6565fa" dark={DARK} flip />

      {/* columns and footings */}
      <path d="M784 694 819 695 807 705 774 702Z" fill="#42c042" />
      <path d="M774 702 807 705v9l-33-3ZM807 705l12.500-9v7.500L807 714Z" fill="#80ff80" />
      <path d="M774 702l4-3v12h-4Z" fill="#40f040" />
      <path d="M776 360h23l8.500 341-21 1Z" fill={FACE} />
      <path d="M1425 664 1459 665 1452 674 1420 672Z" fill="#42c042" />
      <path d="M1419 671 1452 674v8l-33-3ZM1452 674l7-9v8l-7 9Z" fill="#80ff80" />
      <path d="M1419 671l6-4v12h-6Z" fill="#40f040" />
      <path d="M1435 350h26l-10 321h-19v-6h-5Z" fill={FACE} />
      <path d="M1440 350 1432 670" stroke="#6464f0" />

      {/* haunches */}
      <path d="M713 362 859 357v2l-70 15Z" fill="#6a6afa" stroke={DARK} strokeWidth="1.300" />
      <path d="M1380 344 1518 340v2l-44 13-34-2Z" fill="#6a6afa" stroke={DARK} strokeWidth="1.300" />

      {/* ridge beam */}
      <path d="M437 354 800 343 1121 334 1360 327 1742 317 1735 332 1360 344 1121 351 800 358 437 370Z" fill={FACE} />
      <path d="M437 354 800 344 1121 335 1360 328 1742 317.500" stroke={DARK} strokeWidth="2.500" fill="none" />
      <path d="M437 370 800 358 1121 350.500 1360 343.500 1735 332" stroke={DARK} strokeWidth="1.500" fill="none" />

      {/* cross beam A */}
      <path d="M760 222h13l21 121v20l13 10h-11l-14-18-6-12Z" fill="#4040a2" />
      <path d="M789 356.500h18M789 373.500h18" stroke="#e02" strokeWidth="1.200" />
      <path d="M774 318.500h13" stroke="#a02a6a" />

      {/* cross beam B */}
      <path d="M1112 352h9l6 12h-9Z" fill="#4a4ab8" />
      <path d="M1058 247h5l54 87h-11Z" fill={DARK} />
      <path d="M1064 244l52 90h3l-52-92Z" fill="#6060f5" />
      <path d="M1058 234h14l58 100h-12Z" fill="#4040a2" />
      <path d="M1121 335 1203 378v18l-84-46Z" fill="#6060f8" />
      <path d="M1118 334h12l82 45h-18Z" fill={DARK} />
      <path d="M1119 350l6-1 87 47h-18Z" fill={DARK} />
      <path d="M1194 379.500h18M1194 396.500h18" stroke="#e02" strokeWidth="1.200" />
      <path d="M1107 316.500h13" stroke="#a02a6a" />

      {/* cross beam C */}
      <path d="M1376 260h6l56 64h-9Z" fill={DARK} />
      <path d="M1381 250v12l56 63h4Z" fill="#6060f5" />
      <path d="M1376 248h14l63 76h-13Z" fill="#4545ad" />
      <path d="M1445 327 1646 402v20l-200-80Z" fill="#6060f8" />
      <path d="M1440 324h14l200 80h-18Z" fill={DARK} />
      <path d="M1443 342l9-1 202 80h-18Z" fill={DARK} />
      <path d="M1636 404.500h18M1636 422h18" stroke="#e02" strokeWidth="1.200" />
      <path d="M1427 308.500h13" stroke="#c02a6a" />
      <path d="M1380.500 326v18M1516.500 324v9" stroke="#e08080" strokeDasharray="2 3" strokeWidth=".7" />

      {/* right end frame */}
      <path d="M1770 255l1 53-62 158 2-68Z" fill="#5c5cf0" />
      <g fill="none" stroke="#8a8aff" strokeWidth="2.500">
        {RIGHT_SIDE.map(([t, b]) => (
          <path key={t} d={`M${t} ${253 + (1771 - t) * 2.4}L${b} ${308 + (1769 - b) * 2.550}`} />
        ))}
      </g>
      <path d="M1735 348v18M1724 380l-2 25M1715 405l-2 28" stroke="#fff" strokeWidth="1.200" />
      <path d="M1769 311 1709 463" stroke="#4a4ac8" strokeWidth="3" />
      <path d="M1770 253 1711 396" stroke={DARK} strokeWidth="5" />
      <path d="M1771 252v58" stroke="#7b7bff" strokeWidth="2.500" />

      <Lattice nodes={FRONT} top={[374, 323, 1712, 396]} bottom={[378, 383, 1708, 465]} chord={5.500} bar={5} diag={4} color="#7676fc" dark={DARK} />

      {/* axes */}
      <path d="M346 667.500 312 665.500" stroke="#f00" strokeWidth="2" />
      <path d="m307 665.500 9-3v6Z" fill="#b00000" />
      <path d="M346 668 354 662" stroke="#0f0" strokeWidth="2" />
      <path d="m352 659 5-.5v4l-4 2Z" fill="#00e020" />
      <path d="M346 668v32" stroke="#00f" strokeWidth="2" />
      <path d="M343 698h6l-3 9Z" fill="#0000a0" />
      <g fontSize="9" className="font-['Liberation_Sans',sans-serif]">
        <text x="333" y="650" fill="#0f0">Y</text>
        <text x="337" y="717" fill="#00f">Z</text>
        <text x="288" y="665" fill="#f00">X</text>
      </g>
    </svg>
  );
}

/* ---------- results table ---------- */

// bar scale per column: offset of the zero line and pixel length of the bar
const BARS = {
  N: { "-104.73": [5, 49], "-98.87": [7, 47] },
  Vy: { "-18.92": [5, 34] },
  Vz: { "-0.02": [39, 0] },
  MT: { "-0.07": [28, 14] },
  My: { "-48.04": [28, 17], "-48.12": [28, 17] },
  Mz: { "-31.42": [21, 18], "63.20": [39, 35] },
};
const KEYS = ["N", "Vy", "Vz", "MT", "My", "Mz"];

const BASE = ["-104.73", "-18.92", "-0.02", "-0.07", "-48.04", "-31.42"];
const ALT = ["-98.87", "-18.92", "-0.02", "-0.07", "-48.12", "63.20"];

const ROWS = [
  { head: "1", node: ["1"], x: "0.000", v: BASE, section: "1 - HEB 300" },
  { node: ["2"], x: "5.000", v: ALT },
  { node: ["Max N"], x: "5.000", v: ALT, mark: 0, max: true, ext: true },
  { node: ["Min N"], x: "0.000", v: BASE, mark: 0, ext: true, current: true },
  { node: ["Max V", "y"], x: "0.000", v: BASE, mark: 1, max: true, ext: true },
  { node: ["Min V", "y"], x: "0.000", v: BASE, mark: 1, ext: true },
  { node: ["Max V", "z"], x: "0.000", v: BASE, mark: 2, max: true, ext: true },
  { node: ["Min V", "z"], x: "0.000", v: BASE, mark: 2, ext: true },
];

const Sub = ({ t }) => (
  <>
    {t[0]}
    {t[1] && <sub className="bottom-[-2px] text-[10px]">{t[1]}</sub>}
  </>
);

function BarCell({ col, value, cls }) {
  const [left, width] = BARS[col][value];
  const pos = value[0] !== "-";
  return (
    <td className="border border-[#a0a0a0] p-0">
      <div className="grid h-[15px] items-center overflow-hidden">
        <span
          className={"col-start-1 row-start-1 box-content h-[11px] border-[#c0c0c0] " + (pos ? "border-l bg-[#d9e6fb]" : "border-r bg-[#ffc0c0]")}
          style={{ marginLeft: left, width }}
        />
        <span className={"col-start-1 row-start-1 pr-1 text-right " + cls}>{value}</span>
      </div>
    </td>
  );
}

const TH = "border-x border-[#a0a0a0] p-0 font-normal";

function ResultsTable() {
  return (
    <table className="w-full table-fixed border-collapse bg-white text-[11px] leading-[15px] text-black">
      <colgroup>
        <col className="w-[46px]" />
        <col className="w-[72px]" />
        <col className="w-[66px]" />
        {KEYS.map((k) => <col key={k} className="w-[78px]" />)}
        <col />
      </colgroup>
      <thead className="bg-[#efefef]">
        <tr className="h-[15px] leading-[13px]">
          <th rowSpan={3} className="border border-[#777] bg-[#e1e1e1] p-0 pb-1 align-bottom leading-[14px] font-normal">Barra<br />núm.</th>
          {"ABCDEFGHI".split("").map((l) => (
            <th key={l} className={"border border-[#777] p-0 font-normal " + (l === "A" ? "bg-[#3399ff] text-white" : "bg-[#e1e1e1]")}>{l}</th>
          ))}
        </tr>
        <tr className="h-4">
          <th className={TH}>Nudo</th>
          <th className={TH}>Posición</th>
          <th colSpan={3} className={TH}>Fuerzas [kN]</th>
          <th colSpan={3} className={TH}>Momentos [kNm]</th>
          <th className={TH} />
        </tr>
        <tr className="h-[17px]">
          <th className={TH}>núm.</th>
          <th className={TH}>x [m]</th>
          {[["N"], ["V", "y"], ["V", "z"], ["M", "T"], ["M", "y"], ["M", "z"]].map((t) => (
            <th key={t.join("")} className={TH}><Sub t={t} /></th>
          ))}
          <th className={TH}>Sección</th>
        </tr>
      </thead>
      <tbody>
        {ROWS.map((r, i) => (
          <tr key={i} className={"h-4 " + (r.ext ? "bg-[#f3eafd]" : "")}>
            <th className={"border border-[#777] p-0 font-normal " + (r.current ? "bg-[#3399ff]" : "bg-[#e1e1e1]")}>{r.head}</th>
            <td className="border border-[#a0a0a0] p-0 text-center"><div className="h-[15px]"><Sub t={r.node} /></div></td>
            <td className="border border-[#a0a0a0] p-0 pr-1 text-right">{r.x}</td>
            {KEYS.map((k, c) => (
              <BarCell
                key={k}
                col={k}
                value={r.v[c]}
                cls={r.mark === c ? (r.max ? "font-bold text-[#000080]" : "font-bold text-[#800000]") : ""}
              />
            ))}
            <td className="border border-[#a0a0a0] p-0 pl-1">{r.section}</td>
          </tr>
        ))}
      </tbody>
    </table>
  );
}

const SHEETS = [
  "Resultados - Resumen", "Barras - Esfuerzos internos", "Conjunto de barras - Esfuerzos internos", "Secciones - Esfuerzos internos",
  "Nudos - Esfuerzos en apoyos", "Nudos - Deformaciones", "Barras - Deformaciones locales", "Barras - Deformaciones globales",
  "Barras - Coeficientes para pandeo", "Esbelteces de barras",
];

function ResultsPanel() {
  return (
    <section className="mt-[5px] flex h-[277px] shrink-0 flex-col bg-[#efefef]">
      <div className="flex h-5 shrink-0 items-center justify-between bg-[#b8c0ca] pl-1 text-xs text-[#444]">
        <h2>4.1 Barras - Esfuerzos internos</h2>
        <PanelButtons />
      </div>
      <div className="flex h-[25px] shrink-0 items-center bg-linear-to-b from-[#eceff7] to-[#cfd4dc] pl-2">
        <Items spec={TABLE_BAR} comboId="lc-table" comboWidth="w-[134px]" />
      </div>
      <div className="flex h-[197px] shrink-0 border-2 border-[#777] border-b-[#555] bg-[#efefef] font-['Liberation_Sans',Arial,sans-serif]">
        <div className="min-w-0 flex-1"><ResultsTable /></div>
        <div className="mb-[17px] flex w-[17px] flex-col items-center bg-[#f0f0f0]">
          <span className="flex h-[17px] items-center"><Chevron d={UP} /></span>
          <span className="h-[17px] w-3.5 bg-[#cdcdcd]" />
          <span className="flex flex-1 items-end pb-1"><Chevron d={DOWN} /></span>
        </div>
      </div>
      <div className="flex items-start font-['Liberation_Sans',Arial,sans-serif] text-[11px] leading-4 whitespace-nowrap text-black" role="tablist">
        {SHEETS.map((s, i) => (
          <button
            key={s}
            role="tab"
            aria-selected={i === 1}
            className={"h-[17px] rounded-b-sm border-r border-b border-[#555] px-px " + (i === 1 ? "bg-white" : "bg-[#e3e3e3]")}
          >
            {s}
          </button>
        ))}
      </div>
    </section>
  );
}

/* ---------- frame ---------- */

// label, index of the underlined letter
const MENU = [
  ["Archivo", 0], ["Edición", 0], ["Ver", 2], ["Insertar", 0], ["Cálculo", 0], ["Resultados", 3], ["Herramientas", 0],
  ["Tabla", 0], ["Opciones", 0], ["Módulos adicionales", 0], ["Ventana", 0], ["Ayuda", 1],
];

function TitleBar() {
  return (
    <header className="flex h-[23px] shrink-0 items-center bg-[#00b7c6] pl-0.5 text-xs text-black">
      <svg viewBox="0 0 16 16" className="size-4">
        <path d="M4 1h10v14M4 1v6h10M9 10h5M6 4h6" fill="none" stroke="#1f4f78" strokeWidth="1.800" />
        <path d="M5 2h8v4H5Z" fill="#6fb8e0" />
        <circle cx="3.500" cy="10" r="2" fill="none" stroke="#e8a000" strokeWidth="1.600" />
        <circle cx="3.500" cy="13.500" r="2" fill="none" stroke="#e8a000" strokeWidth="1.600" />
      </svg>
      <h1 className="ml-1 flex-1">RSTAB 8.13.00 x64 - [Auvent Gulfin+++jarrets]</h1>
      <div className="flex pr-0.5">
        {["M1 5.500h9", "M.5 3.500h6v7h-6ZM3.500 3v-2.500h6v7H7", "m.5.500 10 10M10.500.500l-10 10"].map((d, i) => (
          <button key={d} aria-label={["Minimizar", "Restaurar", "Cerrar"][i]} className="flex h-[21px] w-[46px] items-center justify-center">
            <svg viewBox="0 0 11 11" className="size-[11px]" fill="none" stroke="#000"><path d={d} /></svg>
          </button>
        ))}
      </div>
    </header>
  );
}

function MenuBar() {
  return (
    <nav className="flex h-6 shrink-0 items-center pl-1 text-xs text-[#4a4a4a]">
      <span className="h-4 w-0.5 border-l-2 border-dotted border-[#9ba0ab]" />
      <span className="ml-1 mr-[9px]"><Icon name="truss" /></span>
      <div className="flex flex-1 gap-[13px]">
        {MENU.map(([m, u]) => (
          <button key={m}>
            {m.slice(0, u)}
            <u>{m[u]}</u>
            {m.slice(u + 1)}
          </button>
        ))}
      </div>
      <div className="flex gap-1.5 pr-1 pt-1">
        {["M1 9h7", "M1 4h7v5H1ZM3 4V2h6v5", "m1 1 8 8M9 1 1 9"].map((d, i) => (
          <button key={d} aria-label={["Minimizar ventana", "Restaurar ventana", "Cerrar ventana"][i]}>
            <svg viewBox="0 0 10 10" className="size-2.5 drop-shadow-[0_1px_0_#fff]" fill="none" stroke="#808080" strokeWidth="1.600"><path d={d} /></svg>
          </button>
        ))}
      </div>
    </nav>
  );
}

function StatusBar() {
  return (
    <footer className="flex h-[21px] shrink-0 flex-col border-t border-[#9da1aa]">
      <div className="flex min-h-0 flex-1 items-center bg-linear-to-b from-[#e3e5ec] via-[#a9aeb8] to-[#bcc1ca] pt-px pl-1 text-[11px] text-[#222]">
        <span className="flex-1 text-xs">Plano de trabajo</span>
        <div className="flex gap-px font-['Liberation_Sans',Arial,sans-serif]">
          {["FORZC", "REJILLA", "CARTES", "REFENT", "GLN", "DXF"].map((s) => (
            <button
              key={s}
              className={"h-[17px] border px-0.5 leading-[15px] " + (s === "REJILLA" ? "border-[#8d929c] border-t-white border-l-white" : "border-white border-t-[#222] border-l-[#222]")}
            >
              {s}
            </button>
          ))}
        </div>
        <div className="flex text-right font-['Liberation_Sans',Arial,sans-serif] leading-4">
          <span className="w-[150px] pr-3">SC: Global XYZ</span>
          <span className="w-[88px] border-l border-[#8d929c] pl-0.5 text-left">Plano: XY</span>
          <span className="w-[74px] border-l border-[#8d929c] pr-3 whitespace-pre">X:  30.181 m</span>
          <span className="w-[74px] border-l border-[#8d929c] pr-3 whitespace-pre">Y:  16.479 m</span>
          <span className="w-[72px] border-l border-[#8d929c] pr-3 whitespace-pre">Z:  0.000 m</span>
        </div>
      </div>
      <div className="flex h-0.5 shrink-0 bg-[#1e4347]">
        <span className="ml-[31%] w-12 bg-[#0f7f86]" />
      </div>
    </footer>
  );
}

export default function App() {
  return (
    <div className="flex h-screen min-h-[640px] flex-col overflow-hidden bg-[#cfd3dc] font-['Roboto','Open_Sans',sans-serif]">
      <TitleBar />
      <MenuBar />
      <div className="flex shrink-0 flex-col gap-px pt-px">
        {[ROW1, ROW2].map((row, i) => (
          <div key={i} className="flex gap-0.5">
            {row.map((spec, k) => <Fragment key={k}><Toolbar spec={spec} /></Fragment>)}
          </div>
        ))}
      </div>
      <div className="flex min-h-0 flex-1">
        <Navigator />
        <main className="ml-1 flex min-w-0 flex-1 flex-col">
          <div className="min-h-0 flex-1 overflow-hidden border-t-2 border-l-2 border-r border-b border-[#666] border-r-white border-b-[#ddd] bg-white">
            <Model />
          </div>
          <ResultsPanel />
        </main>
      </div>
      <StatusBar />
    </div>
  );
}
